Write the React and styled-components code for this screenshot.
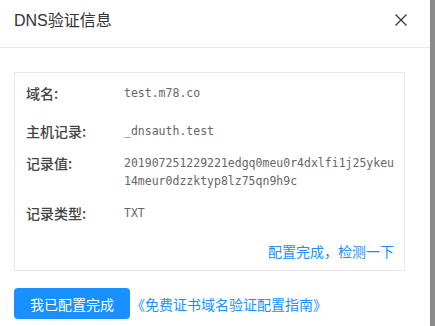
import React from "react";
import styled, { createGlobalStyle } from "styled-components";

const GlobalStyle = createGlobalStyle`
  html, body {
    margin: 0;
    padding: 0;
    background: #8a8a8a;
  }
  * {
    box-sizing: border-box;
  }
`;

const records = [
  { label: "域名:", value: "test.m78.co", gap: 20 },
  { label: "主机记录:", value: "_dnsauth.test", gap: 14 },
  { label: "记录值:", value: "201907251229221edgq0meu0r4dxlfi1j25ykeu14meur0dzzktyp8lz75qn9h9c", gap: 14 },
  { label: "记录类型:", value: "TXT", gap: 0 },
];

const App = () => {
  return (
    <>
      <GlobalStyle />
      <Modal>
        <Header>
          <Title>DNS验证信息</Title>
          <Close aria-label="close">
            <svg width="14" height="14" viewBox="0 0 14 14">
              <path d="M1.5 1.5 L12.5 12.5 M12.5 1.5 L1.5 12.5" stroke="#333" strokeWidth="1.2" fill="none" />
            </svg>
          </Close>
        </Header>

        <Body>
          <InfoBox>
            {records.map((item, i) => (
              <Row key={i} gap={item.gap}>
                <Label>{item.label}</Label>
                <Value>{item.value}</Value>
              </Row>
            ))}
            <CheckLine>
              <TextLink>配置完成，检测一下</TextLink>
            </CheckLine>
          </InfoBox>

          <Footer>
            <PrimaryButton>我已配置完成</PrimaryButton>
            <TextLink>《免费证书域名验证配置指南》</TextLink>
          </Footer>
        </Body>
      </Modal>
    </>
  );
};

const Modal = styled.div`
  width: 430px;
  height: 326px;
  background: #fff;
  font-family: "Liberation Sans", "Noto Sans CJK SC", sans-serif;
`;

const Header = styled.div`
  height: 48px;
  padding: 9px 22px 0 14px;
  display: flex;
  justify-content: space-between;
  align-items: flex-start;
  border-bottom: 1px solid #e8e8e8;
`;

const Title = styled.h2`
  margin: 0;
  font-size: 16px;
  font-weight: normal;
  line-height: 24px;
  color: #333;
`;

const Close = styled.span`
  display: flex;
  align-items: center;
  height: 24px;
  margin-top: -1px;
`;

const Body = styled.div`
  padding: 24px 25px 0 14px;
`;

const InfoBox = styled.div`
  border: 1px solid #e8e8e8;
  padding: 11px 10px 9px 11px;
`;

const Row = styled.div`
  display: grid;
  grid-template-columns: 98px 272px;
  margin-bottom: ${(p) => p.gap}px;
`;

const Label = styled.span`
  font-size: 14px;
  line-height: 18px;
  color: #444;
  font-weight: 500;
  font-family: "Noto Sans CJK SC", sans-serif;
`;

const Value = styled.span`
  font-family: "DejaVu Sans Mono", monospace;
  font-size: 11.5px;
  line-height: 18px;
  color: #666;
  word-break: break-all;
`;

const CheckLine = styled.div`
  display: flex;
  justify-content: flex-end;
  margin-top: 19px;
`;

const TextLink = styled.a`
  font-family: "Noto Sans CJK SC", sans-serif;
  font-size: 14px;
  line-height: 20px;
  color: #1890ff;
  cursor: pointer;
`;

const Footer = styled.div`
  display: flex;
  align-items: center;
  gap: 1px;
  margin-top: 17px;
`;

const PrimaryButton = styled.button`
  height: 31px;
  padding: 0 16px;
  border: none;
  border-radius: 4px;
  background: #1890ff;
  color: #fff;
  font-family: "Noto Sans CJK SC", sans-serif;
  font-size: 14px;
  box-shadow: 0 2px 0 rgba(0, 0, 0, 0.045);
`;

export default App;
